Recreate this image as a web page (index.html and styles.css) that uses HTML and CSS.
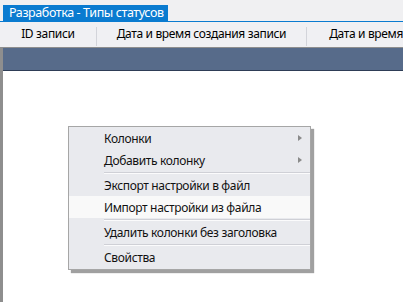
FILE: index.html
```html
<!DOCTYPE html>
<html>
<head>
<meta charset="utf-8">
<link rel="stylesheet" href="styles.css">
</head>
<body>
<div class="window">
  <div class="tabstrip">
    <div class="tab">Разработка - Типы статусов</div>
  </div>
  <div class="header">
    <div class="col col1">ID записи</div>
    <div class="sep"></div>
    <div class="col col2">Дата и время создания записи</div>
    <div class="sep"></div>
    <div class="col col3">Дата и время</div>
  </div>
  <div class="grid">
    <div class="band"></div>
    <div class="rows"></div>
  </div>
</div>
<div class="menu">
  <div class="item"><span>Колонки</span><i class="arrow"></i></div>
  <div class="item"><span>Добавить колонку</span><i class="arrow"></i></div>
  <div class="divider"></div>
  <div class="item"><span>Экспорт настройки в файл</span></div>
  <div class="item hover"><span>Импорт настройки из файла</span></div>
  <div class="divider"></div>
  <div class="item"><span>Удалить колонки без заголовка</span></div>
  <div class="divider"></div>
  <div class="item"><span>Свойства</span></div>
</div>
</body>
</html>
```
FILE: styles.css
```css
html, body {
  margin: 0;
  padding: 0;
}
body {
  width: 403px;
  height: 302px;
  overflow: hidden;
  position: relative;
  background: #ffffff;
  font-family: "Noto Sans", "Open Sans", sans-serif;
  font-size: 12px;
  letter-spacing: -0.35px;
  color: #000;
}
.window {
  display: flex;
  flex-direction: column;
  height: 302px;
}
.tabstrip {
  background: #f0f0f2;
  padding: 5px 0 0 3px;
  height: 16px;
  border-bottom: 1px solid #0a7bd0;
  display: flex;
}
.tab {
  background: #0a7bd0;
  color: #fff;
  font-size: 12.5px;
  letter-spacing: -0.4px;
  line-height: 16px;
  height: 16px;
  padding: 0 4px 0 6px;
  white-space: nowrap;
}
.header {
  height: 25px;
  background: #f0f0f3;
  display: flex;
  align-items: center;
  white-space: nowrap;
  overflow: hidden;
}
.col {
  line-height: 16px;
  padding-bottom: 2px;
}
.col1 {
  width: 96px;
  text-align: center;
}
.col2 {
  width: 210px;
  text-align: center;
}
.col3 {
  padding-left: 22px;
}
.sep {
  width: 1px;
  height: 19px;
  margin-top: 3px;
  background: #d3d4da;
}
.grid {
  flex: 1;
  display: flex;
  flex-direction: column;
  border-top: 1px solid #8e8e8e;
  border-left: 3px solid #8e8e8e;
}
.band {
  height: 22px;
  background: #576b8a;
  border-bottom: 1px solid #2e3d56;
}
.rows {
  flex: 1;
  background: #fff;
}
.menu {
  position: absolute;
  left: 68px;
  top: 126px;
  width: 241px;
  background: #e9eaee;
  border: 1px solid #a6a6a6;
  box-shadow: 3px 3px 1px #a0a0a0;
  padding: 0 0 1px;
  color: #111;
}
.item {
  height: 22px;
  display: flex;
  align-items: center;
  padding-left: 35px;
  position: relative;
}
.item span {
  white-space: nowrap;
}
.item.hover {
  background: #f9f9f9;
}
.arrow {
  position: absolute;
  right: 8px;
  top: 8px;
  width: 0;
  height: 0;
  border-top: 3.5px solid transparent;
  border-bottom: 3.5px solid transparent;
  border-left: 4px solid #8a8a8a;
}
.divider {
  height: 1px;
  margin: 1px 0 0 35px;
  background: #cfd0d6;
  border-bottom: 1px solid #fbfbfc;
}
```
